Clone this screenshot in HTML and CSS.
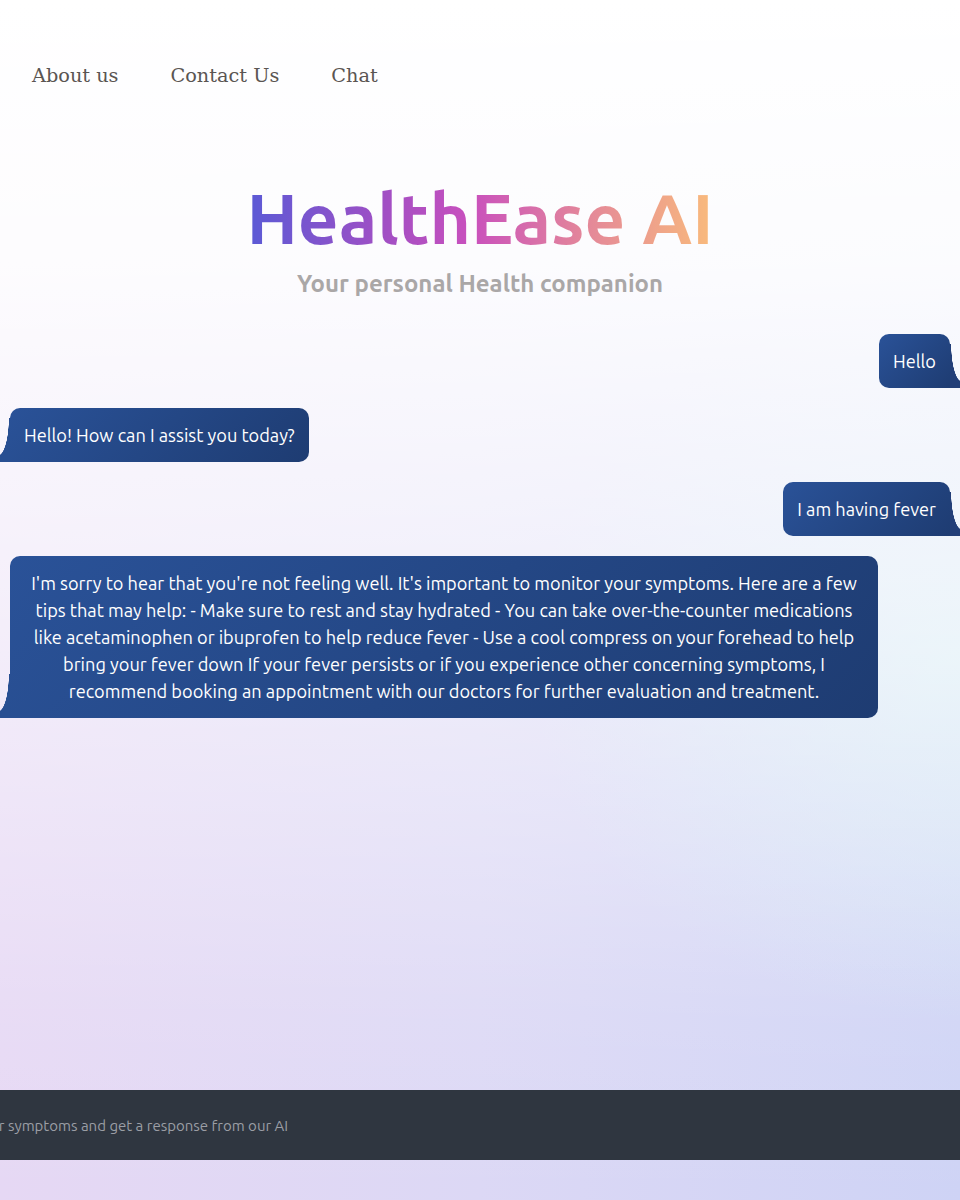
FILE: index.html
```html
<!DOCTYPE html>
<html lang="en">
<head>
<meta charset="utf-8">
<title>HealthEase AI</title>
<link rel="stylesheet" href="styles.css">
</head>
<body>
<div class="page">
  <nav class="nav">
    <a class="nav-link" href="#">About us</a>
    <a class="nav-link" href="#">Contact Us</a>
    <a class="nav-link" href="#">Chat</a>
  </nav>
  <header class="hero">
    <h1 class="title">HealthEase AI</h1>
    <p class="subtitle">Your personal Health companion</p>
  </header>
  <main class="chat">
    <div class="msg msg-user"><div class="bubble">Hello</div></div>
    <div class="msg msg-bot"><div class="bubble">Hello! How can I assist you today?</div></div>
    <div class="msg msg-user"><div class="bubble">I am having fever</div></div>
    <div class="msg msg-bot"><div class="bubble">I'm sorry to hear that you're not feeling well. It's important to monitor your symptoms. Here are a few tips that may help: - Make sure to rest and stay hydrated - You can take over-the-counter medications like acetaminophen or ibuprofen to help reduce fever - Use a cool compress on your forehead to help bring your fever down If your fever persists or if you experience other concerning symptoms, I recommend booking an appointment with our doctors for further evaluation and treatment.</div></div>
  </main>
  <footer class="composer">
    <span class="placeholder">Enter your symptoms and get a response from our AI</span>
  </footer>
</div>
</body>
</html>
```
FILE: styles.css
```css
html, body {
  margin: 0;
  padding: 0;
}
body {
  font-family: "Ubuntu", "Noto Sans", "Open Sans", sans-serif;
  background:
    linear-gradient(to bottom, #ffffff 0%, rgba(255, 255, 255, 0.92) 22%, rgba(255, 255, 255, 0.6) 50%, rgba(255, 255, 255, 0.1) 85%, rgba(255, 255, 255, 0) 100%),
    radial-gradient(ellipse 45% 30% at 100% 55%, rgba(214, 236, 244, 0.9), rgba(214, 236, 244, 0) 100%),
    linear-gradient(to right, #e6d8f4 0%, #dcd8f5 50%, #ced3f5 100%);
  overflow: hidden;
}
.page {
  min-height: 1200px;
  display: flex;
  flex-direction: column;
}
.nav {
  display: flex;
  gap: 52px;
  padding: 65px 32px 0;
}
.nav-link {
  font-family: "DejaVu Serif", serif;
  font-size: 19.3px;
  color: #5a5552;
  text-decoration: none;
  line-height: 22px;
}
.hero {
  text-align: center;
  margin-top: 88px;
}
.title {
  margin: 0;
  font-size: 71px;
  font-weight: 700;
  line-height: 86px;
  display: inline-block;
  background: linear-gradient(90deg, #5a5ad6 0%, #a24fc4 30%, #c950bd 48%, #e3869a 72%, #f9bb7c 100%);
  -webkit-background-clip: text;
  background-clip: text;
  color: transparent;
}
.subtitle {
  margin: 8px 0 0;
  font-size: 24px;
  font-weight: 600;
  color: #aaa7a7;
  line-height: 30px;
}
.chat {
  display: flex;
  flex-direction: column;
  gap: 20px;
  padding: 35px 10px 0;
}
.msg {
  display: flex;
}
.msg-user {
  justify-content: flex-end;
}
.msg-bot {
  justify-content: flex-start;
}
.bubble {
  position: relative;
  box-sizing: border-box;
  max-width: 868px;
  padding: 13.5px 14px;
  border-radius: 10px;
  color: #ffffff;
  font-size: 18.2px;
  line-height: 27px;
  text-align: center;
  background: linear-gradient(135deg, #2a5298 0%, #1e3c72 100%);
}
.msg-user .bubble {
  border-bottom-right-radius: 0;
}
.msg-bot .bubble {
  border-bottom-left-radius: 0;
}
.bubble::after {
  content: "";
  position: absolute;
  bottom: 0;
  width: 12px;
  height: 44px;
}
.msg-user .bubble::after {
  right: -12px;
  background: radial-gradient(ellipse 11px 38px at 100% 0, rgba(35, 63, 120, 0) 97%, #233f78 100%);
}
.msg-bot .bubble::after {
  left: -12px;
  background: radial-gradient(ellipse 11px 38px at 0 0, rgba(40, 79, 146, 0) 97%, #284f92 100%);
}
.composer {
  margin-top: auto;
  margin-bottom: 40px;
  height: 70px;
  background: #2f3640;
  display: flex;
  align-items: center;
  overflow: hidden;
}
.placeholder {
  margin-left: -66px;
  font-size: 15px;
  color: #9b9ea5;
  white-space: nowrap;
}
```
